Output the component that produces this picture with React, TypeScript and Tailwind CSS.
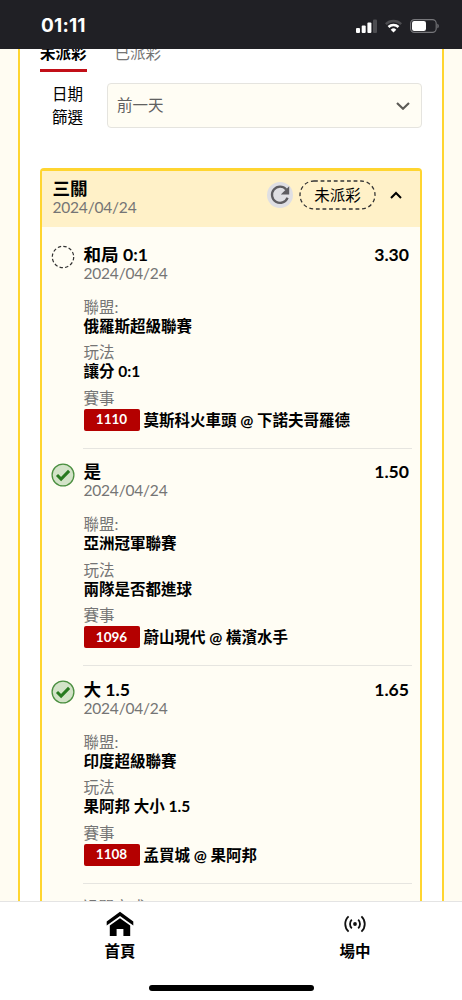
interface Bet {
  title: string;
  date: string;
  odds: string;
  won: boolean;
  league: string;
  market: string;
  code: string;
  match: string;
}

const bets: Bet[] = [
  {
    title: "和局 0:1",
    date: "2024/04/24",
    odds: "3.30",
    won: false,
    league: "俄羅斯超級聯賽",
    market: "讓分 0:1",
    code: "1110",
    match: "莫斯科火車頭 @ 下諾夫哥羅德",
  },
  {
    title: "是",
    date: "2024/04/24",
    odds: "1.50",
    won: true,
    league: "亞洲冠軍聯賽",
    market: "兩隊是否都進球",
    code: "1096",
    match: "蔚山現代 @ 橫濱水手",
  },
  {
    title: "大 1.5",
    date: "2024/04/24",
    odds: "1.65",
    won: true,
    league: "印度超級聯賽",
    market: "果阿邦 大小 1.5",
    code: "1108",
    match: "孟買城 @ 果阿邦",
  },
];

const StatusBar = () => (
  <header className="relative z-10 flex h-[49px] shrink-0 items-center justify-between bg-[#202025] pl-[41px] pr-[23px] pt-[2px]">
    <span className="font-['Inter'] text-[19px] font-bold leading-none tracking-[0.2px] text-white">
      01:11
    </span>
    <div className="flex items-center">
      <svg width="21" height="14" viewBox="0 0 21 14" fill="#fff">
        <rect x="0" y="9" width="4" height="5" rx="1" />
        <rect x="5.7" y="6.5" width="4" height="7.5" rx="1" />
        <rect x="11.4" y="3.5" width="4" height="10.5" rx="1" />
        <rect x="17" y="0.5" width="4" height="13.5" rx="1" fill="#4d4d51" />
      </svg>
      <svg className="ml-2" width="17" height="14" viewBox="0 0 17 14" fill="none" strokeWidth="2.5">
        <path d="M.8 5.1a10.9 10.9 0 0 1 15.4 0" stroke="#4d4d51" />
        <path d="M3.5 8a7.1 7.1 0 0 1 10 0" stroke="#fff" />
        <path d="M8.5 13.6 5.7 10.7a4 4 0 0 1 5.6 0Z" fill="#fff" />
      </svg>
      <svg className="ml-2" width="29" height="14" viewBox="0 0 29 14">
        <rect x="0.6" y="0.6" width="25.6" height="12.8" rx="3.8" fill="none" stroke="#77777b" strokeWidth="1.1" />
        <rect x="2" y="2" width="14" height="10" rx="2.2" fill="#fff" />
        <path d="M27.4 4.7c1.8.7 1.8 3.9 0 4.6Z" fill="#77777b" />
      </svg>
    </div>
  </header>
);

const StatusIcon = ({ won }: { won: boolean }) => (
  <svg className="mt-[14px] shrink-0" width="24" height="24" viewBox="0 0 24 24" fill="none">
    {won ? (
      <>
        <circle cx="12" cy="12" r="10.9" fill="#d3e3c8" stroke="#4b8f40" strokeWidth="1.3" />
        <path d="m6 12 4.1 4.1 8-8.2" stroke="#287a20" strokeWidth="3" />
      </>
    ) : (
      <circle cx="12" cy="12" r="10.7" stroke="#333" strokeWidth="1.2" strokeDasharray="3.4 2.2" />
    )}
  </svg>
);

const Field = ({ label, value }: { label: string; value: string }) => (
  <div className="mb-[7.5px]">
    <div className="h-[18px] leading-[18px] text-[#757575]">{label}</div>
    <div className="h-5 font-bold leading-5">{value}</div>
  </div>
);

const BetRow = ({ bet }: { bet: Bet }) => (
  <div className="flex h-[217.5px] gap-2 pl-[9px] pr-2">
    <StatusIcon won={bet.won} />
    <div className="flex-1 border-b-[1.5px] border-[#e6e5e0] pl-[0.5px] pt-[13.5px]">
      <div className="flex h-5 justify-between pr-[3px] text-[17.6px] font-bold leading-5">
        <span>{bet.title}</span>
        <span>{bet.odds}</span>
      </div>
      <div className="mb-4 h-[17px] leading-[17px] tracking-[-0.2px] text-[#757575]">{bet.date}</div>
      <Field label="聯盟:" value={bet.league} />
      <Field label="玩法" value={bet.market} />
      <div className="h-[18px] leading-[18px] text-[#757575]">賽事</div>
      <div className="mt-[1.5px] flex h-[23px] items-center gap-1 font-bold">
        <span className="flex h-[22px] w-14 items-center justify-center rounded-[2px] bg-[#b40000] text-[13.5px] text-white">
          {bet.code}
        </span>
        <span className="whitespace-nowrap leading-5">{bet.match}</span>
      </div>
    </div>
  </div>
);

const App = () => {
  return (
    <div className="flex h-[1000px] w-[462px] flex-col overflow-hidden bg-[#fffcf2] font-['Lato','Noto_Sans_CJK_TC',sans-serif] text-[15.5px] text-black">
      <StatusBar />
      <main className="mx-[18px] min-h-0 flex-1 overflow-hidden border-x-2 border-[#ffd530] bg-white px-5">
        <div className="-mt-2 flex h-[31px] gap-7">
          <div className="border-b-[3px] border-[#c20f18] font-bold leading-[25px]">未派彩</div>
          <div className="leading-[25px] text-[#757575]">已派彩</div>
        </div>

        <div className="mt-[11px] flex items-center">
          <div className="w-[67px] pl-3 leading-[22.5px]">
            日期
            <br />
            篩選
          </div>
          <div className="flex h-[45px] flex-1 items-center justify-between rounded border border-[#e5e4df] bg-[#fffdf4] pl-[9px] pr-[11px] text-[#616161]">
            <span>前一天</span>
            <svg width="14" height="8" viewBox="0 0 14 8" fill="none" stroke="#5d5b56" strokeWidth="2.2">
              <path d="m1 1 6 5.7L13 1" />
            </svg>
          </div>
        </div>

        <section className="mt-10 overflow-hidden rounded-t border-x-2 border-t-[3px] border-[#ffd530] bg-[#fffdf4]">
          <div className="mb-1 flex h-14 items-center bg-[#fff1c8] pl-[10.5px] pr-[18px]">
            <div className="mb-[3px] flex-1">
              <div className="h-[19px] text-[17.6px] font-bold leading-[19px]">三關</div>
              <div className="h-[19px] leading-[19px] tracking-[-0.2px] text-[#757575]">2024/04/24</div>
            </div>
            <div className="mb-[9px] flex items-center">
              <span className="flex size-[26px] items-center justify-center rounded-full bg-[#dfdfe3]">
                <svg width="26" height="26" viewBox="0 0 26 26" fill="none">
                  <path d="M19.2 7.4A8.1 8.1 0 1 0 20.6 15.8" stroke="#5e5d61" strokeWidth="2.3" />
                  <path d="M22.2 4.2v8.4h-8.4Z" fill="#5e5d61" />
                </svg>
              </span>
              <span className="relative ml-[6px] flex h-[30px] w-[77px] items-center justify-center">
                <svg className="absolute inset-0" width="77" height="30" viewBox="0 0 77 30" fill="none">
                  <rect x="1" y="1" width="75" height="28" rx="14" stroke="#333" strokeWidth="1.3" strokeDasharray="3.8 2.8" />
                </svg>
                <span className="pt-[2px]">未派彩</span>
              </span>
              <svg className="ml-[14px]" width="12" height="8" viewBox="0 0 12 8" fill="none" stroke="#000" strokeWidth="2">
                <path d="m1 7 5-5 5 5" />
              </svg>
            </div>
          </div>
          {bets.map((bet) => (
            <BetRow key={bet.code} bet={bet} />
          ))}
          <div className="h-[22px] pl-[41px] pt-[13px] leading-5 text-[#757575]">過關方式</div>
        </section>
      </main>

      <nav className="flex h-[99px] shrink-0 flex-col border-t border-[#e4e4e4] bg-white font-bold">
        <div className="flex h-[83px] pl-[2px] pt-[9px]">
          <div className="flex w-[236px] shrink-0 flex-col items-center">
            <svg width="28" height="26" viewBox="0 0 28 26">
              <path d="M14 0.8 27.3 10.5v4L14 4.9 0.7 14.5v-4Z" />
              <path d="M14 7.2 24.2 14.6V25h-6.8v-7h-6.8v7H3.8V14.6Z" />
            </svg>
            <span className="mt-1 leading-5">首頁</span>
          </div>
          <div className="flex w-[234px] shrink-0 flex-col items-center">
            <svg className="my-1" width="22" height="18" viewBox="0 0 22 18" fill="none" stroke="#111" strokeWidth="1.8">
              <circle cx="11" cy="9" r="1.9" fill="#111" stroke="none" />
              <path d="M7.8 4.7a6 6 0 0 0 0 8.6M14.2 4.7a6 6 0 0 1 0 8.6M4.6 1.3a10.5 10.5 0 0 0 0 15.4M17.4 1.3a10.5 10.5 0 0 1 0 15.4" />
            </svg>
            <span className="mt-1 leading-5">場中</span>
          </div>
        </div>
        <div className="mx-auto h-[6px] w-[165px] rounded-full bg-black" />
      </nav>
    </div>
  );
};

export default App;
